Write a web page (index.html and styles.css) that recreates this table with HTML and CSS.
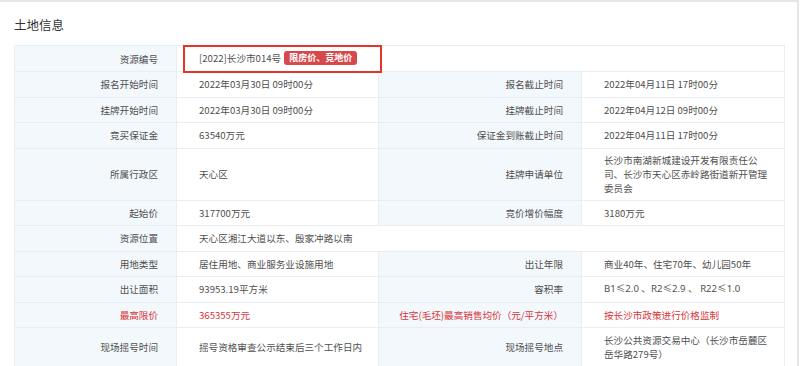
FILE: index.html
```html
<!DOCTYPE html>
<html lang="zh-CN">
<head>
<meta charset="utf-8">
<title>土地信息</title>
<link rel="stylesheet" href="styles.css">
</head>
<body>
<div class="card">
  <h2 class="title">土地信息</h2>
  <table class="info">
    <colgroup>
      <col class="c-label1">
      <col class="c-value1">
      <col class="c-label2">
      <col class="c-value2">
    </colgroup>
    <tbody>
      <tr>
        <th>资源编号</th>
        <td colspan="3" class="mark-cell">[2022]长沙市014号 <span class="badge">限房价、竞地价</span><span class="mark"></span></td>
      </tr>
      <tr>
        <th>报名开始时间</th><td>2022年03月30日 09时00分</td>
        <th>报名截止时间</th><td>2022年04月11日 17时00分</td>
      </tr>
      <tr>
        <th>挂牌开始时间</th><td>2022年03月30日 09时00分</td>
        <th>挂牌截止时间</th><td>2022年04月12日 09时00分</td>
      </tr>
      <tr>
        <th>竞买保证金</th><td>63540万元</td>
        <th>保证金到账截止时间</th><td>2022年04月11日 17时00分</td>
      </tr>
      <tr class="tall3">
        <th>所属行政区</th><td>天心区</td>
        <th>挂牌申请单位</th><td>长沙市南湖新城建设开发有限责任公司、长沙市天心区赤岭路街道新开管理委员会</td>
      </tr>
      <tr>
        <th>起始价</th><td>317700万元</td>
        <th>竞价增价幅度</th><td>3180万元</td>
      </tr>
      <tr>
        <th>资源位置</th><td colspan="3">天心区湘江大道以东、殷家冲路以南</td>
      </tr>
      <tr>
        <th>用地类型</th><td>居住用地、商业服务业设施用地</td>
        <th>出让年限</th><td>商业40年、住宅70年、幼儿园50年</td>
      </tr>
      <tr>
        <th>出让面积</th><td>93953.19平方米</td>
        <th>容积率</th><td class="latin">B1≤2.0 、R2≤2.9 、 R22≤1.0</td>
      </tr>
      <tr class="red">
        <th>最高限价</th><td>365355万元</td>
        <th>住宅(毛坯)最高销售均价（元/平方米）</th><td>按长沙市政策进行价格监制</td>
      </tr>
      <tr class="tall2">
        <th>现场摇号时间</th><td>摇号资格审查公示结束后三个工作日内</td>
        <th>现场摇号地点</th><td>长沙公共资源交易中心（长沙市岳麓区岳华路279号）</td>
      </tr>
    </tbody>
  </table>
</div>
</body>
</html>
```

FILE: styles.css
```css
* {
  box-sizing: border-box;
}

html, body {
  margin: 0;
  padding: 0;
  background: #ffffff;
}

body {
  font-family: "Noto Sans CJK SC", "Microsoft YaHei", "Noto Sans", sans-serif;
  color: #4f4f4f;
}

.card {
  width: 799px;
  height: 366px;
  border-top: 2px solid #e6e6e6;
  border-right: 2px solid #e6e6e6;
  padding: 14px 13px 0 14px;
  overflow: hidden;
}

.title {
  margin: 0;
  font-size: 12.5px;
  font-weight: normal;
  color: #333333;
  line-height: 18px;
  height: 29px;
}

.info {
  width: 770px;
  table-layout: fixed;
  border-collapse: collapse;
  font-size: 9.6px;
  line-height: 14px;
}

.c-label1 { width: 162px; }
.c-value1 { width: 202px; }
.c-label2 { width: 203px; }
.c-value2 { width: 203px; }

.info tr {
  height: 25.5px;
}

.info th,
.info td {
  border: 1px solid #e9eef3;
  padding: 4px 14px 4px 22px;
  vertical-align: middle;
  font-weight: normal;
}

.info th {
  background: #f3f8fc;
  text-align: right;
  padding: 4px 18px 4px 8px;
  color: #4f4f4f;
}

.info td {
  text-align: left;
  background: #ffffff;
}

.info td.latin {
  font-family: "Noto Sans", "Noto Sans CJK SC", sans-serif;
}

.info tr:first-child {
  height: 26px;
}

.info .tall3 {
  height: 52px;
}

.info .tall2 {
  height: 39px;
}

.info .red th,
.info .red td {
  color: #d7363b;
}

.mark-cell {
  position: relative;
}

.badge {
  display: inline-block;
  background: #d6484b;
  color: #ffffff;
  font-weight: bold;
  font-size: 9px;
  line-height: 14px;
  padding: 0 5px;
  border-radius: 3px;
  margin-left: 1px;
  vertical-align: middle;
  position: relative;
  top: -1px;
}

.mark {
  position: absolute;
  left: 6px;
  top: -1px;
  width: 199px;
  height: 28px;
  border: 2px solid #e5352b;
}
```
